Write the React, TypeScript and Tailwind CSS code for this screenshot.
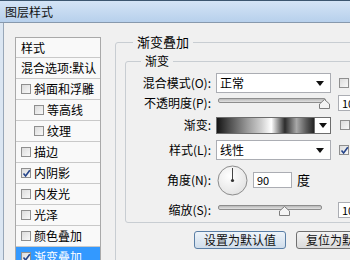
const items = [
  { label: '斜面和浮雕', indent: false, on: false },
  { label: '等高线', indent: true, on: false },
  { label: '纹理', indent: true, on: false },
  { label: '描边', indent: false, on: false },
  { label: '内阴影', indent: false, on: true },
  { label: '内发光', indent: false, on: false },
  { label: '光泽', indent: false, on: false },
  { label: '颜色叠加', indent: false, on: false },
  { label: '渐变叠加', indent: false, on: true, selected: true },
];

function Check({ on = false }: { on?: boolean }) {
  return (
    <span className="relative w-[10px] h-[10px] shrink-0 border border-[#8f8f8f] bg-linear-to-br from-[#dcdcdc] to-[#f8f8f8] flex items-center justify-center">
      {on && (
        <svg width="9" height="9" viewBox="0 0 9 9" className="absolute">
          <path d="M1.5 4.5 L3.6 7 L7.8 1.2" fill="none" stroke="#25448a" strokeWidth="1.6" />
        </svg>
      )}
    </span>
  );
}

function Arrow() {
  return (
    <svg width="8" height="5" viewBox="0 0 8 5">
      <polygon points="0,0 8,0 4,5" fill="#111" />
    </svg>
  );
}

function Slider({ thumb, width }: { thumb: string; width: string }) {
  return (
    <div className={`relative h-[14px] ${width} ml-[2px]`}>
      <div className="absolute left-0 right-0 top-[2px] h-[5px] rounded-[2px] border border-[#8d8d8d] bg-linear-to-b from-[#b9b9b9] to-[#e2e2e2]" />
      <svg width="11" height="10" viewBox="0 0 11 10" className={`absolute top-[3px] ${thumb}`}>
        <path d="M5.5 0.5 L10.5 5 L10.5 9.5 L0.5 9.5 L0.5 5 Z" fill="#f4f4f4" stroke="#7d7d7d" />
      </svg>
    </div>
  );
}

function Num({ v, w = 'w-[20px]' }: { v: string; w?: string }) {
  return (
    <div className={`${w} h-[16px] border border-[#abadb3] bg-white text-[11px] leading-[14px] pl-[3px] shrink-0`}>
      {v}
    </div>
  );
}

function Row({ label, h, mt, children }: { label: string; h: string; mt: string; children: React.ReactNode }) {
  return (
    <div className={`flex items-center ${h} ${mt}`}>
      <div className="w-[86px] text-right pr-[1px] shrink-0">{label}</div>
      <div className="ml-[4px] flex items-center">{children}</div>
    </div>
  );
}

export default function App() {
  return (
    <div className="w-[350px] h-[260px] overflow-hidden bg-[#f0f0f0] text-black text-[12px] leading-[16px] font-['Noto_Sans_CJK_SC','Noto_Sans',sans-serif]">
      <div className="h-[23px] border-t border-[#3c5670] border-b border-b-[#8799ad] bg-linear-to-b from-[#d4e4f6] to-[#b7d0ec] pl-[5px] flex items-center text-[12px] text-[#111]">
        图层样式
      </div>

      <div className="flex h-[237px]">
        <div className="w-[4px] shrink-0 bg-[#dbe6f2] border-r border-[#98a7b8]" />

        <div className="flex items-start pt-[11px] pl-[11px]">
          <div className="w-[86px] mt-[3px] shrink-0 border border-[#a9a9a9] bg-[#f9f9f9]">
            <div className="h-[20px] border-b border-[#c9c9c9] pl-[5px] flex items-center">样式</div>
            <div className="h-[21px] border-b border-[#c9c9c9] pl-[5px] flex items-center whitespace-nowrap">混合选项:默认</div>
            {items.map((it) => (
              <div
                key={it.label}
                className={`h-[21px] border-b border-[#c9c9c9] flex items-center whitespace-nowrap ${it.indent ? 'pl-[18px]' : 'pl-[5px]'} ${it.selected ? 'bg-[#3399ff] text-white' : ''}`}
              >
                <Check on={it.on} />
                <span className="ml-[3px]">{it.label}</span>
              </div>
            ))}
          </div>

          <fieldset className="ml-[14px] w-[260px] h-[240px] shrink-0 border border-[#c8cdd2] rounded-[3px] pl-[9px] pt-[3px]">
            <legend className="ml-[8px] px-[4px] text-[13px] leading-[16px]">渐变叠加</legend>

            <fieldset className="w-[240px] border border-[#c8cdd2] rounded-[3px] pb-[3px]">
              <legend className="ml-[15px] px-[4px] text-[12px] leading-[16px]">渐变</legend>

              <Row label="混合模式(O):" h="h-[20px]" mt="mt-[4px]">
                <div className="w-[115px] h-[20px] border border-[#abadb3] bg-white flex items-center justify-between pl-[3px] pr-[6px]">
                  <span>正常</span>
                  <Arrow />
                </div>
                <div className="ml-[8px]"><Check /></div>
              </Row>

              <Row label="不透明度(P):" h="h-[18px]" mt="mt-[1px]">
                <Slider width="w-[108px]" thumb="left-[101px]" />
                <div className="ml-[12px]"><Num v="100" w="w-[30px]" /></div>
              </Row>

              <Row label="渐变:" h="h-[18px]" mt="mt-[4px]">
                <div className="flex h-[17px] border border-[#6d6d6d]">
                  <div className="w-[97px] bg-[linear-gradient(to_right,#151515_0%,#4a4a4a_12%,#9c9c9c_32%,#d0d0d0_46%,#ffffff_56%,#2c2c2c_70%,#a8a8a8_82%,#5a5a5a_92%,#242424_100%)]" />
                  <div className="w-[16px] border-l border-[#6d6d6d] bg-white flex items-center justify-center">
                    <Arrow />
                  </div>
                </div>
                <div className="ml-[9px]"><Check /></div>
              </Row>

              <Row label="样式(L):" h="h-[20px]" mt="mt-[6px]">
                <div className="w-[115px] h-[20px] border border-[#abadb3] bg-white flex items-center justify-between pl-[3px] pr-[6px]">
                  <span>线性</span>
                  <Arrow />
                </div>
                <div className="ml-[8px]"><Check on /></div>
              </Row>

              <Row label="角度(N):" h="h-[32px]" mt="mt-[4px]">
                <svg width="31" height="31" viewBox="0 0 31 31" className="ml-[1px]">
                  <defs>
                    <radialGradient id="dial" cx="0.4" cy="0.35" r="0.7">
                      <stop offset="0" stopColor="#ffffff" />
                      <stop offset="1" stopColor="#e2e2e2" />
                    </radialGradient>
                  </defs>
                  <circle cx="15.5" cy="15.5" r="14.5" fill="url(#dial)" stroke="#8c8c8c" />
                  <line x1="15.5" y1="15.5" x2="15.5" y2="3" stroke="#444" strokeWidth="1" />
                  <circle cx="15.5" cy="15.5" r="1.6" fill="#333" />
                </svg>
                <div className="ml-[5px]"><Num v="90" w="w-[39px]" /></div>
                <span className="ml-[5px] text-[13px]">度</span>
              </Row>

              <Row label="缩放(S):" h="h-[18px]" mt="mt-[5px]">
                <Slider width="w-[104px]" thumb="left-[61px]" />
                <div className="ml-[16px]"><Num v="100" w="w-[30px]" /></div>
              </Row>
            </fieldset>

            <div className="flex mt-[8px] ml-[69px] gap-[10px]">
              <button className="w-[92px] h-[18px] shrink-0 rounded-[3px] border border-[#5b7fa6] bg-linear-to-b from-[#eef4fa] to-[#cfdcea] text-[12px] leading-[16px] text-[#111]">
                设置为默认值
              </button>
              <button className="w-[92px] h-[18px] shrink-0 rounded-[3px] border border-[#707070] bg-linear-to-b from-[#f4f4f4] to-[#dadada] text-[12px] leading-[16px] text-[#111]">
                复位为默认值
              </button>
            </div>
          </fieldset>
        </div>
      </div>
    </div>
  );
}
